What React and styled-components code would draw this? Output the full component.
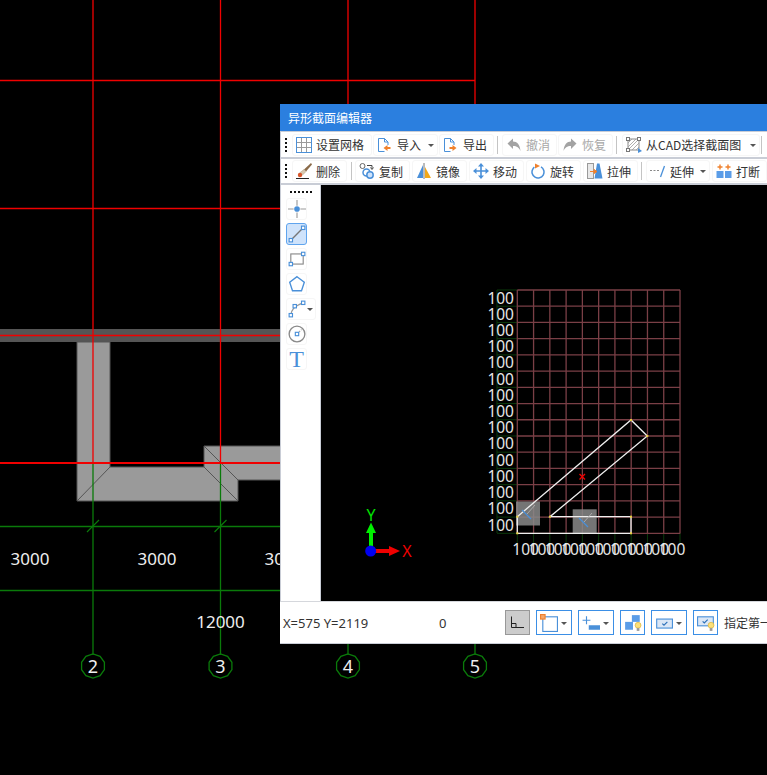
import React from "react";
import styled, { createGlobalStyle } from "styled-components";

const GlobalStyle = createGlobalStyle`
  html, body {
    margin: 0;
    height: 100%;
    background: #000;
    overflow: hidden;
  }
`;

const Stage = styled.div`
  position: relative;
  width: 767px;
  height: 775px;
  overflow: hidden;
  background: #000;
  font-family: "Noto Sans CJK SC", "Noto Sans", sans-serif;
`;

const Drawing = styled.svg`
  display: block;
  font-family: "Noto Sans", sans-serif;
`;

const Dialog = styled.section`
  position: absolute;
  left: 280px;
  top: 104px;
  width: 640px;
  height: 540px;
  display: flex;
  flex-direction: column;
  background: #c9cdd6;
  font-size: 12px;
  color: #333;
`;

const TitleBar = styled.header`
  flex: 0 0 27px;
  display: flex;
  align-items: center;
  padding-left: 8px;
  background: #2b7fdf;
  color: #fff;
`;

const ToolStack = styled.div`
  display: flex;
  flex-direction: column;
  gap: 2px;
  padding: 1px 0 2px 1px;
`;

const Toolbar = styled.div`
  display: flex;
  align-items: center;
  gap: ${(p) => p.$gap}px;
  height: ${(p) => p.$height}px;
  background: #fff;
`;

const Grip = styled.span`
  flex: 0 0 ${(p) => p.$width}px;
  display: flex;
  flex-direction: column;
  align-items: flex-start;
  gap: 2px;
  padding-left: 4px;
  box-sizing: border-box;

  &::before, &::after {
    content: "";
    width: 2px;
    height: 6px;
    background: repeating-linear-gradient(#111 0 2px, transparent 2px 4px);
  }
`;

const ToolButton = styled.button`
  flex: 0 0 ${(p) => p.$width}px;
  position: relative;
  display: flex;
  align-items: center;
  gap: 4px;
  height: 22px;
  margin: 0;
  padding: 0 0 0 3px;
  box-sizing: border-box;
  border: 1px solid #f6f6f6;
  border-radius: 3px;
  background: #fff;
  font: inherit;
  white-space: nowrap;
  color: ${(p) => (p.$disabled ? "#a8a8a8" : "#333")};
`;

const Caret = styled.i`
  position: absolute;
  right: ${(p) => p.$right}px;
  top: 50%;
  margin-top: -1px;
  border-style: solid;
  border-width: 3px 3px 0;
  border-color: #555 transparent transparent;
`;

const Divider = styled.span`
  flex: 0 0 1px;
  align-self: center;
  height: 18px;
  margin: 0 ${(p) => p.$after}px 0 ${(p) => p.$before}px;
  background: #c4c4c4;
`;

const Body = styled.div`
  flex: 1;
  display: flex;
  min-height: 0;
  padding-left: 1px;
`;

const SidePanel = styled.aside`
  flex: 0 0 40px;
  display: flex;
  flex-direction: column;
  align-items: flex-start;
  gap: 3px;
  padding: 6px 0 0 5px;
  box-sizing: border-box;
  background: #fff;
  border-right: 1px solid #c9cdd6;
`;

const DotRow = styled.span`
  width: 22px;
  height: 2px;
  margin: 0 0 2px 4px;
  background: repeating-linear-gradient(90deg, #111 0 2px, transparent 2px 4px);
`;

const SideButton = styled.button`
  position: relative;
  display: flex;
  align-items: center;
  justify-content: ${(p) => (p.$wide ? "flex-start" : "center")};
  width: ${(p) => (p.$wide ? 30 : 21)}px;
  height: 22px;
  margin: 0;
  padding: ${(p) => (p.$wide ? "0 0 0 1px" : "0")};
  box-sizing: border-box;
  border: 1px solid ${(p) => (p.$active ? "#5fa4ee" : "#f6f6f6")};
  border-radius: 3px;
  background: ${(p) => (p.$active ? "#cfe3fb" : "#fff")};
`;

const TextTool = styled.span`
  font-family: "Liberation Serif", serif;
  font-size: 24px;
  line-height: 22px;
  color: #4a90d9;
`;

const SectionCanvas = styled.main`
  flex: 1;
  background: #000;
  overflow: hidden;
`;

const StatusBar = styled.footer`
  flex: 0 0 42px;
  display: flex;
  align-items: center;
  gap: 6px;
  margin-bottom: 1px;
  padding-left: 3px;
  background: #fff;
  border-top: 1px solid #d5d7dc;
  box-sizing: border-box;
  white-space: nowrap;
`;

const Coords = styled.span`
  flex: 0 0 ${(p) => p.$width}px;
  margin-right: -6px;
  font-family: "Noto Sans", sans-serif;
  font-size: 13px;
`;

const StatusButton = styled.button`
  position: relative;
  flex: 0 0 ${(p) => p.$width}px;
  display: flex;
  align-items: center;
  height: 25px;
  margin: 0;
  padding: 0 0 0 3px;
  box-sizing: border-box;
  border: 1px solid ${(p) => (p.$on ? "#989898" : "#3b8fe6")};
  background: ${(p) => (p.$on ? "#cccccc" : "#fff")};
`;

const BLUE = "#4a90d9";
const ORANGE = "#f0812c";

const Icon = ({ children, size = 16 }) => (
  <svg width={size} height={size} viewBox="0 0 16 16" style={{ flex: "none", display: "block" }}>
    {children}
  </svg>
);

const Handle = ({ x, y }) => (
  <rect x={x - 1.5} y={y - 1.5} width="3" height="3" fill="#fff" stroke={BLUE} strokeWidth="1" />
);

const GridIcon = () => (
  <Icon>
    <rect x="0.5" y="0.5" width="15" height="15" fill="none" stroke={BLUE} />
    <path d="M5.5 1v14M10.5 1v14M1 5.5h14M1 10.5h14" stroke="#9a9a9a" fill="none" />
  </Icon>
);

const DocIcon = ({ dir }) => (
  <Icon>
    <path d="M1.5 1.5h6l3.5 3.5v3M1.5 1.5v13h6" fill="none" stroke={BLUE} />
    <path d="M7.5 1.5v3.5h3.5" fill="none" stroke={BLUE} />
    {dir === "in" ? (
      <path d="M6.5 11l4-3v2h3v2h-3v2z" fill={ORANGE} />
    ) : (
      <path d="M13.5 11l-4-3v2h-3v2h3v2z" fill={ORANGE} />
    )}
  </Icon>
);

const TurnIcon = ({ flip }) => (
  <Icon>
    <g transform={flip ? "translate(16 0) scale(-1 1)" : undefined}>
      <path d="M1.5 6.5L7 1.5v3c4 0 7 3 7.5 9.5-1.5-3.5-3.5-5-7.5-5v3z" fill="#a3a3a3" />
    </g>
  </Icon>
);

const CadIcon = () => (
  <Icon>
    <rect x="2" y="2" width="11" height="11" fill="none" stroke="#8a8a8a" />
    <path d="M2 6l4-4M2 10l8-8M2 13l11-11M6 13l7-7M10 13l3-3" stroke="#9a9a9a" strokeWidth="0.8" />
    <rect x="0.5" y="0.5" width="3" height="3" fill="#fff" stroke="#777" />
    <rect x="11.5" y="0.5" width="3" height="3" fill="#fff" stroke="#777" />
    <rect x="0.5" y="11.5" width="3" height="3" fill="#fff" stroke="#777" />
    <path d="M12 11l4 3-4 2z" fill={BLUE} />
  </Icon>
);

const BrushIcon = () => (
  <Icon>
    <path d="M15 0L8 6.5l2 2L16 1.5z" fill="#8a6a48" />
    <path d="M8 6.5L3.5 10l-.5 3 3-.5 4-4z" fill="#d8c8b0" stroke="#a89878" strokeWidth="0.5" />
    <circle cx="4" cy="12" r="2.2" fill="#d8552a" />
    <path d="M0 15.5h13" stroke="#222" />
  </Icon>
);

const CopyIcon = () => (
  <Icon>
    <circle cx="3.5" cy="3" r="2.5" fill="none" stroke="#666" />
    <path d="M8 2.5h5v3M11.5 4.5l1.5 2 1.5-2" fill="none" stroke="#444" />
    <circle cx="7.5" cy="9.5" r="3.5" fill="none" stroke={BLUE} strokeWidth="1.5" />
    <circle cx="11" cy="12" r="3.2" fill="#cfe3fb" stroke={BLUE} strokeWidth="1.5" />
  </Icon>
);

const MirrorIcon = () => (
  <Icon>
    <path d="M7 2L1 15h6z" fill={BLUE} />
    <path d="M8 0v16" stroke="#777" />
    <path d="M9 4l6 11H9z" fill="#f2a818" />
  </Icon>
);

const MoveIcon = () => (
  <Icon>
    <path d="M3 8h10M8 3v10" stroke={BLUE} strokeWidth="1.6" />
    <path d="M8 0l3 3.5H5zM8 16l3-3.5H5zM0 8l3.5-3v6zM16 8l-3.5-3v6z" fill={BLUE} />
  </Icon>
);

const RotateIcon = () => (
  <Icon>
    <circle cx="8" cy="9" r="6" fill="none" stroke={BLUE} strokeWidth="1.5" strokeDasharray="30 8" transform="rotate(-60 8 9)" />
    <path d="M5 0.5l5 2.5-5 2.5z" fill={ORANGE} />
  </Icon>
);

const StretchIcon = () => (
  <Icon>
    <rect x="0.5" y="0.5" width="6" height="15" fill="#e8e8e8" stroke="#999" />
    <path d="M10 .5h2.5l3 15H7.5z" fill={BLUE} />
    <path d="M3 8.5h6M7 6.5l3 2-3 2z" stroke={ORANGE} fill={ORANGE} />
  </Icon>
);

const ExtendIcon = () => (
  <Icon>
    <path d="M0 7.5h10" stroke="#888" strokeDasharray="2 1.5" />
    <path d="M10.5 14l4-11" stroke={BLUE} strokeWidth="1.3" />
  </Icon>
);

const BreakIcon = () => (
  <Icon>
    <rect x="0.5" y="8" width="7" height="7" fill="#5b9de8" />
    <rect x="9" y="8" width="6.5" height="7" fill="#5b9de8" />
    <path d="M4 1.5v5M1.5 4h5M12 1.5v5M9.5 4h5" stroke={ORANGE} strokeWidth="1.4" />
  </Icon>
);

const PointIcon = () => (
  <Icon size={18}>
    <path d="M8 0v5M8 11v5M0 8h5M11 8h5" stroke="#9a9a9a" />
    <circle cx="8" cy="8" r="2.5" fill={BLUE} />
  </Icon>
);

const LineIcon = () => (
  <Icon size={18}>
    <path d="M2.5 13.5L13.5 2.5" stroke="#777" strokeWidth="1.2" />
    <Handle x={2.5} y={13.5} />
    <Handle x={13.5} y={2.5} />
  </Icon>
);

const RectIcon = () => (
  <Icon size={18}>
    <rect x="2.5" y="3.5" width="11" height="9" fill="none" stroke="#888" />
    <Handle x={2.5} y={12.5} />
    <Handle x={13.5} y={3.5} />
  </Icon>
);

const PentagonIcon = () => (
  <Icon size={18}>
    <path d="M8 1.5l6.5 5-2.5 7.5H4L1.5 6.5z" fill="none" stroke={BLUE} strokeWidth="1.2" />
  </Icon>
);

const ArcIcon = () => (
  <Icon size={18}>
    <path d="M2.5 13.5C3 9 5 5.5 13.5 2.5" fill="none" stroke="#999" strokeWidth="1.2" />
    <Handle x={2.5} y={13.5} />
    <Handle x={6} y={5.5} />
    <Handle x={13.5} y={2.5} />
  </Icon>
);

const CircleIcon = () => (
  <Icon size={18}>
    <circle cx="8" cy="8" r="7" fill="none" stroke="#8a8a8a" strokeWidth="1.2" />
    <path d="M8 8l4-4" stroke="#a9a9a9" strokeDasharray="1.5 1" />
    <Handle x={8} y={8} />
  </Icon>
);

const OrthoIcon = () => (
  <Icon>
    <path d="M2.5 1.5v11H15M2.5 8.5H7V12" fill="none" stroke="#222" />
  </Icon>
);

const SnapBoxIcon = () => (
  <Icon size={18}>
    <rect x="2.5" y="2.5" width="13" height="13" fill="none" stroke={BLUE} />
    <rect x="0.5" y="0.5" width="4" height="4" fill="#f5a76a" stroke={ORANGE} />
  </Icon>
);

const PlusBarIcon = () => (
  <Icon size={18}>
    <path d="M4 2v7M.5 5.5h7" stroke={BLUE} />
    <rect x="6" y="10" width="10" height="4" fill={BLUE} />
  </Icon>
);

const Bulb = () => (
  <g>
    <circle cx="12.5" cy="10" r="2.6" fill="#fbe07a" stroke="#d8b23a" strokeWidth="0.6" />
    <rect x="11.3" y="12.5" width="2.4" height="2.5" fill="#999" />
  </g>
);

const LayerBulbIcon = () => (
  <Icon size={18}>
    <rect x="1" y="7" width="7" height="7" fill="#5b9de8" />
    <rect x="7" y="1" width="7" height="6" fill="#5b9de8" />
    <Bulb />
  </Icon>
);

const CheckBoxIcon = () => (
  <Icon size={18}>
    <rect x="1.5" y="4.5" width="14" height="8" fill="#dbe7f6" stroke={BLUE} />
    <path d="M6.5 8.5l1.5 1.5 3-3" fill="none" stroke="#2b6fb8" />
  </Icon>
);

const CheckBulbIcon = () => (
  <Icon size={18}>
    <rect x="0.5" y="2.5" width="14" height="8" fill="#dbe7f6" stroke={BLUE} />
    <path d="M5 6.5l1.5 1.5 3-3" fill="none" stroke="#2b6fb8" />
    <Bulb />
  </Icon>
);

const RED = "#f00000";
const GREEN = "#0a7a0a";
const axisX = [93, 220.5, 348, 475];
const spanLabels = [
  { x: 30, label: "3000" },
  { x: 157, label: "3000" },
  { x: 284, label: "3000" },
];

const Ring = ({ x, label }) => {
  const points = Array.from({ length: 10 }, (_, i) => {
    const a = (Math.PI * 2 * i) / 10 + Math.PI / 10;
    return `${(x + 12 * Math.cos(a)).toFixed(1)},${(666 + 12 * Math.sin(a)).toFixed(1)}`;
  }).join(" ");
  return (
    <g>
      <polygon points={points} fill="none" stroke={GREEN} strokeWidth="1.3" />
      <text x={x} y="672.5" fill="#eee" fontSize="18" textAnchor="middle">{label}</text>
    </g>
  );
};

const FloorPlan = () => (
  <Drawing width="767" height="775" viewBox="0 0 767 775">
    <rect x="0" y="329" width="290" height="13" fill="#555" />
    <path
      d="M77 342H110V467H204V446H290V480H238V501H77Z"
      fill="#9a9a9a"
      stroke="#555"
      strokeWidth="1"
    />
    <path d="M77 501L110 467M204 446L238 480M204 467L238 501" stroke="#555" strokeWidth="1" fill="none" />
    <path d="M93 463V655M220.5 463V655M348 640V655M475 640V655" stroke={GREEN} strokeWidth="1.3" />
    <path d="M0 526.5H290M0 590.5H290" stroke={GREEN} strokeWidth="1.3" />
    <path d="M87 532L99 520M214.5 532L226.5 520" stroke={GREEN} strokeWidth="1.2" />
    <path d="M93 0V463M220.5 0V463M348 0V110M475 0V110" stroke={RED} strokeWidth="1.3" />
    <path d="M0 80.5H475M0 208.5H290M0 335.5H290" stroke={RED} strokeWidth="1.3" />
    <path d="M0 463H290" stroke={RED} strokeWidth="2" />
    {spanLabels.map((s) => (
      <text key={s.x} x={s.x} y="565" fill="#eee" fontSize="17" textAnchor="middle">{s.label}</text>
    ))}
    <text x="220.5" y="628" fill="#eee" fontSize="17" textAnchor="middle">12000</text>
    {axisX.map((x, i) => (
      <Ring key={x} x={x} label={i + 2} />
    ))}
  </Drawing>
);

const GRID_LEFT = 517.3;
const GRID_TOP = 290;
const CELL = 16.27;
const cols = Array.from({ length: 11 }, (_, i) => GRID_LEFT + i * CELL);
const rows = Array.from({ length: 16 }, (_, i) => GRID_TOP + i * 16.22);

const SectionDrawing = () => (
  <Drawing width="446" height="416" viewBox="321 185 446 416">
    {rows.map((y) => (
      <path key={y} d={`M497 ${y}H517`} stroke="#0b3a0b" />
    ))}
    {cols.map((x) => (
      <path key={x} d={`M${x} 533V543`} stroke="#0b3a0b" />
    ))}
    <path d={`M497 ${GRID_TOP}V533`} stroke="#0b3a0b" />
    {cols.map((x) => (
      <path key={x} d={`M${x} ${GRID_TOP}V533.5`} stroke="#7a3f46" strokeWidth="1.3" />
    ))}
    {rows.map((y) => (
      <path key={y} d={`M${GRID_LEFT} ${y}H680`} stroke="#7a3f46" strokeWidth="1.3" />
    ))}
    {rows.slice(0, 15).map((y) => (
      <text key={y} x="514" y={y + 13.5} fill="#e6e6e6" fontSize="15.5" textAnchor="end">100</text>
    ))}
    {cols.slice(0, 10).map((x) => (
      <text key={x} x={x + 8.3} y="555" fill="#e6e6e6" fontSize="15.5" textAnchor="middle">100</text>
    ))}
    <rect x="516" y="501.5" width="24" height="24" fill="#8a8a8a" fillOpacity="0.85" />
    <rect x="572.7" y="509.3" width="24" height="24" fill="#8a8a8a" fillOpacity="0.85" />
    <path
      d="M517.3 516.7L631 420L647.3 436L550 516.7H631V533.3H517.3Z"
      fill="none"
      stroke="#eee"
      strokeWidth="1.3"
    />
    <path d="M522 510l9 9M579 518l9 9" stroke="#4a90d9" strokeWidth="1.3" />
    <path d="M527 514l8-9M584 522l8-9" stroke="#aaa" strokeWidth="1" />
    {[[517.3, 516.7], [631, 420], [647.3, 436], [550, 516.7], [631, 516.7], [631, 533.3], [517.3, 533.3]].map(([x, y]) => (
      <rect key={`${x}-${y}`} x={x - 1} y={y - 1} width="2" height="2" fill="#e8d040" />
    ))}
    <path d="M579.5 474l5.5 5.5M585 474l-5.5 5.5" stroke="#f00000" strokeWidth="1.4" />
    <rect x="369" y="533" width="4" height="18" fill="#00f000" />
    <path d="M371 522.5L376 533H366Z" fill="#00f000" />
    <rect x="371" y="549" width="18" height="4" fill="#f00000" />
    <path d="M400 551L389 546V556Z" fill="#f00000" />
    <circle cx="370.7" cy="551" r="5.5" fill="#0000f0" />
    <text x="371" y="521" fill="#00e000" fontSize="16" textAnchor="middle">Y</text>
    <text x="407" y="557" fill="#f00000" fontSize="16" textAnchor="middle">X</text>
  </Drawing>
);

const App = () => (
  <Stage>
    <GlobalStyle />
    <FloorPlan />
    <Dialog>
      <TitleBar>异形截面编辑器</TitleBar>
      <ToolStack>
        <Toolbar $gap={1} $height={25}>
          <Grip $width={10} />
          <ToolButton $width={80}><GridIcon />设置网格</ToolButton>
          <ToolButton $width={65}><DocIcon dir="in" />导入<Caret $right={3} /></ToolButton>
          <ToolButton $width={55}><DocIcon dir="out" />导出</ToolButton>
          <Divider $before={2} $after={3} />
          <ToolButton $width={55} $disabled><TurnIcon />撤消</ToolButton>
          <ToolButton $width={55} $disabled><TurnIcon flip />恢复</ToolButton>
          <Divider $before={2} $after={4} />
          <ToolButton $width={138}><CadIcon />从CAD选择截面图<Caret $right={3} /></ToolButton>
          <Divider $before={0} $after={3} />
        </Toolbar>
        <Toolbar $gap={2} $height={24}>
          <Grip $width={9} />
          <ToolButton $width={55}><BrushIcon />删除</ToolButton>
          <Divider $before={2} $after={1} />
          <ToolButton $width={55}><CopyIcon />复制</ToolButton>
          <ToolButton $width={55}><MirrorIcon />镜像</ToolButton>
          <ToolButton $width={55}><MoveIcon />移动</ToolButton>
          <ToolButton $width={55}><RotateIcon />旋转</ToolButton>
          <ToolButton $width={55}><StretchIcon />拉伸</ToolButton>
          <Divider $before={1} $after={2} />
          <ToolButton $width={64}><ExtendIcon />延伸<Caret $right={3} /></ToolButton>
          <ToolButton $width={55}><BreakIcon />打断</ToolButton>
        </Toolbar>
      </ToolStack>
      <Body>
        <SidePanel>
          <DotRow />
          <SideButton><PointIcon /></SideButton>
          <SideButton $active><LineIcon /></SideButton>
          <SideButton><RectIcon /></SideButton>
          <SideButton><PentagonIcon /></SideButton>
          <SideButton $wide><ArcIcon /><Caret $right={2} /></SideButton>
          <SideButton><CircleIcon /></SideButton>
          <SideButton><TextTool>T</TextTool></SideButton>
        </SidePanel>
        <SectionCanvas>
          <SectionDrawing />
        </SectionCanvas>
      </Body>
      <StatusBar>
        <Coords $width={156}>X=575 Y=2119</Coords>
        <Coords $width={66}>0</Coords>
        <StatusButton $width={25} $on><OrthoIcon /></StatusButton>
        <StatusButton $width={36}><SnapBoxIcon /><Caret $right={4} /></StatusButton>
        <StatusButton $width={36}><PlusBarIcon /><Caret $right={4} /></StatusButton>
        <StatusButton $width={25}><LayerBulbIcon /></StatusButton>
        <StatusButton $width={36}><CheckBoxIcon /><Caret $right={4} /></StatusButton>
        <StatusButton $width={25}><CheckBulbIcon /></StatusButton>
        <span>指定第一</span>
      </StatusBar>
    </Dialog>
  </Stage>
);

export default App;
